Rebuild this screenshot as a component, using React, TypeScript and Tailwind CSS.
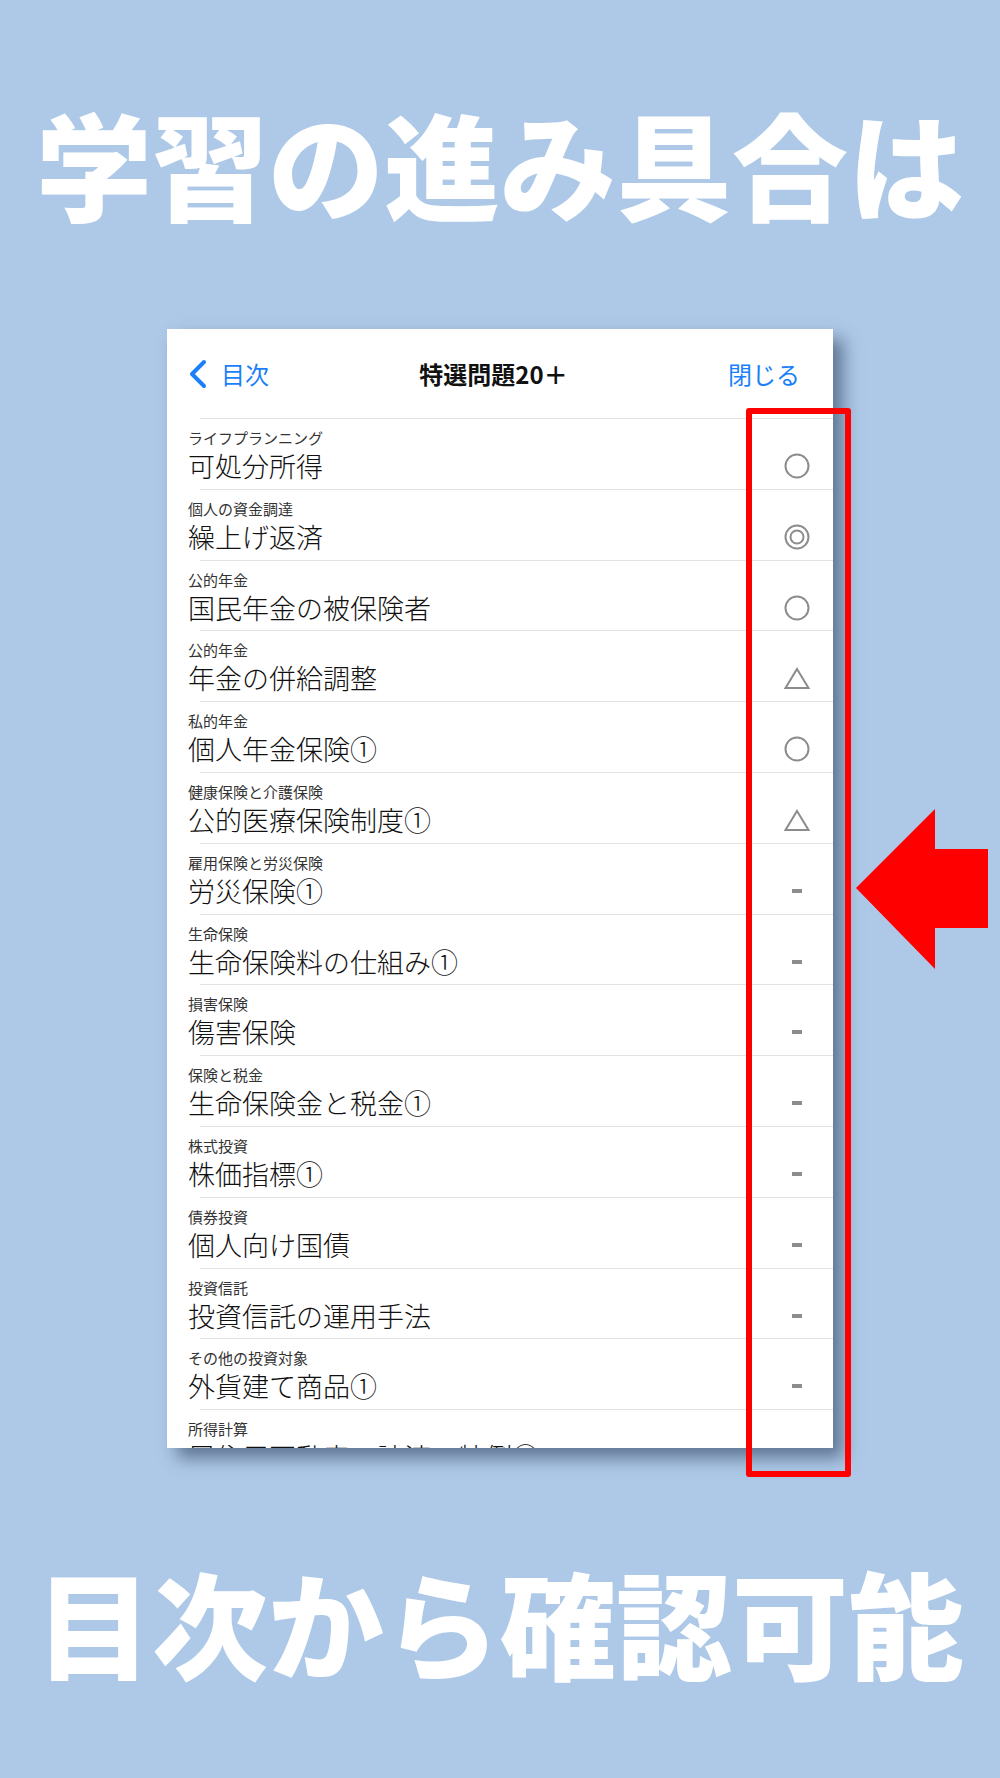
import React from "react";

type Mark = "circle" | "double" | "triangle" | "dash";

const rows: { label: string; title: string; mark: Mark }[] = [
  { label: "ライフプランニング", title: "可処分所得", mark: "circle" },
  { label: "個人の資金調達", title: "繰上げ返済", mark: "double" },
  { label: "公的年金", title: "国民年金の被保険者", mark: "circle" },
  { label: "公的年金", title: "年金の併給調整", mark: "triangle" },
  { label: "私的年金", title: "個人年金保険①", mark: "circle" },
  { label: "健康保険と介護保険", title: "公的医療保険制度①", mark: "triangle" },
  { label: "雇用保険と労災保険", title: "労災保険①", mark: "dash" },
  { label: "生命保険", title: "生命保険料の仕組み①", mark: "dash" },
  { label: "損害保険", title: "傷害保険", mark: "dash" },
  { label: "保険と税金", title: "生命保険金と税金①", mark: "dash" },
  { label: "株式投資", title: "株価指標①", mark: "dash" },
  { label: "債券投資", title: "個人向け国債", mark: "dash" },
  { label: "投資信託", title: "投資信託の運用手法", mark: "dash" },
  { label: "その他の投資対象", title: "外貨建て商品①", mark: "dash" },
  { label: "所得計算", title: "居住用不動産の譲渡の特例②", mark: "dash" },
];

function StatusMark({ mark }: { mark: Mark }) {
  // grey progress symbols on the right of each row
  if (mark === "dash") {
    return (
      <div className="w-[26px] flex justify-center">
        <div className="w-[10px] h-[4px] bg-[#8c8c8c]" />
      </div>
    );
  }
  return (
    <svg width="26" height="26" viewBox="0 0 26 26" fill="none" stroke="#8c8c8c" strokeWidth="2">
      {mark === "circle" && <circle cx="13" cy="13" r="11.5" />}
      {mark === "double" && (
        <>
          <circle cx="13" cy="13" r="11.5" />
          <circle cx="13" cy="13" r="6.5" />
        </>
      )}
      {mark === "triangle" && <polygon points="13,4 24.5,23 1.5,23" strokeLinejoin="miter" />}
    </svg>
  );
}

export default function App() {
  return (
    <div className="relative w-[1000px] h-[1778px] overflow-hidden bg-[#adc9e7] font-['Noto_Sans_CJK_JP','Noto_Sans',sans-serif]">
      <div className="flex flex-col items-center">
        {/* top headline */}
        <h1 className="mt-[103px] h-[116px] leading-[116px] text-[116px] font-black text-white whitespace-nowrap">
          学習の進み具合は
        </h1>

        {/* phone screen panel */}
        <div className="mt-[110px] w-[666px] h-[1119px] bg-white overflow-hidden shadow-[10px_10px_16px_rgba(70,90,118,0.75)]">
          <div className="h-[89px] flex items-center px-[20px]">
            <div className="flex-1 flex items-center text-[#1a7ff8]">
              <svg width="22" height="30" viewBox="0 0 22 30" fill="none" stroke="#1a7ff8" strokeWidth="4" strokeLinecap="round" strokeLinejoin="round">
                <path d="M17 3 L5 15 L17 27" />
              </svg>
              <span className="ml-[12px] text-[24px] leading-none">目次</span>
            </div>
            <div className="text-[24px] leading-none font-bold text-[#111]">特選問題20＋</div>
            <div className="flex-1 text-right pr-[13px] text-[24px] leading-none text-[#1a7ff8]">閉じる</div>
          </div>

          <ul>
            {rows.map((r, i) => (
              <li key={i} className="pl-[21px]">
                <div className="ml-[12px] h-px bg-[#e2e2e2]" />
                <div className="h-[69.8px] pt-[10px] pr-[23px]">
                  <div className="h-[18px] leading-[18px] text-[15px] text-[#333]">{r.label}</div>
                  <div className="mt-[4px] h-[30px] flex items-center justify-between">
                    <span className="text-[27px] leading-[30px] font-light text-[#111] whitespace-nowrap">{r.title}</span>
                    <StatusMark mark={r.mark} />
                  </div>
                </div>
              </li>
            ))}
          </ul>
        </div>

        {/* bottom headline */}
        <h2 className="mt-[114px] h-[116px] leading-[116px] text-[116px] font-black text-white whitespace-nowrap">
          目次から確認可能
        </h2>
      </div>

      {/* red highlight box over the status column */}
      <div className="absolute left-[746px] top-[408px] w-[105px] h-[1069px] border-[6px] border-[#ff0000] rounded-[3px]" />

      {/* red arrow pointing at the box */}
      <svg className="absolute left-[856px] top-[809px]" width="132" height="160" viewBox="0 0 132 160">
        <polygon points="0,79 79,0 79,40 132,40 132,119 79,119 79,160" fill="#ff0000" />
      </svg>
    </div>
  );
}
